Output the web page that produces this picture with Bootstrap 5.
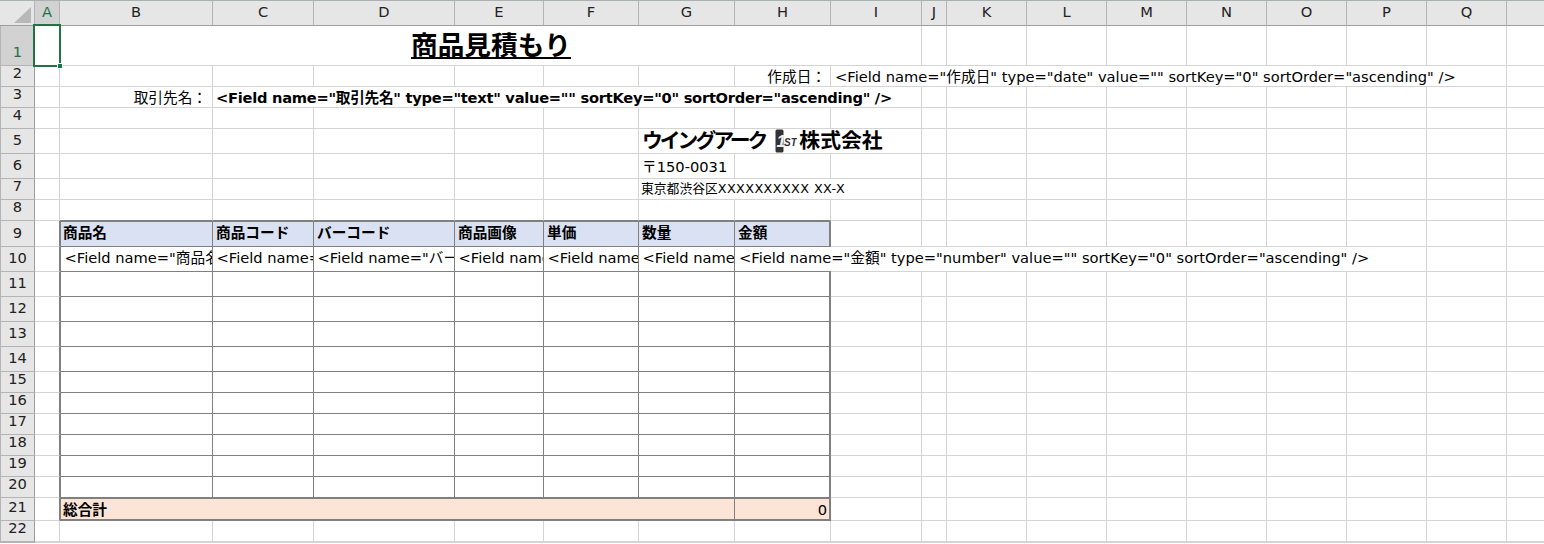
<!DOCTYPE html>
<html lang="ja">
<head>
<meta charset="utf-8">
<title>商品見積もり</title>
<link href="https://cdn.jsdelivr.net/npm/bootstrap@5.3.0/dist/css/bootstrap.min.css" rel="stylesheet">
<style>
html,body{margin:0;height:544px;overflow:hidden;background:#fff}
.sheet{border-collapse:separate;border-spacing:0;table-layout:fixed;width:1544px;font-family:"DejaVu Sans","Noto Sans CJK JP",sans-serif;font-size:14.67px;color:#000;line-height:1}
.sheet td,.sheet th{padding:0 0 1px 4px;border-right:1px solid #d4d4d4;border-bottom:1px solid #d4d4d4;font-weight:400;white-space:nowrap;overflow:hidden;vertical-align:bottom}
.sheet thead th{background:#e6e6e6;border-right:1px solid #b4b4b4;border-bottom:1px solid #9e9e9e;border-top:1px solid #a9b2b0;text-align:center;vertical-align:middle;padding:0 0 2px;color:#222;overflow:visible}
.sheet tbody th{background:#e6e6e6;border-left:1px solid #b4b4b4;border-right:1px solid #9e9e9e;border-bottom:1px solid #b4b4b4;text-align:center;vertical-align:bottom;padding:0 0 5px;color:#222;overflow:visible}
.sheet thead th.cur,.sheet tbody th.cur{background:#d2d2d2;color:#217346}
.sheet thead th:last-child,.sheet td:last-child{border-right:0}
.corner{display:block;margin:4px 0 0 14px}
.w35{width:35px}.w25{width:25px}.w153{width:153px}.w101{width:101px}.w141{width:141px}.w89{width:89px}.w95{width:95px}.w96{width:96px}.w91{width:91px}.w80{width:80px}.w38{width:38px}
.h40 > *{height:40px}.h26 > *{height:26px}.h25 > *{height:25px}.h23 > *{height:23px}.h22 > *{height:22px}.h21 > *{height:21px}
.sheet td.title{font-size:26.67px;font-weight:700;text-decoration:underline;text-align:center;vertical-align:bottom;padding:0 0 5px 1px}
.sheet td.company{font-size:20.8px;font-weight:700;padding:0 0 0 3px;line-height:24px}
.kana{letter-spacing:-3px}
.sheet td.postal{padding:0 0 3px 3px}
.sheet td.addr{font-size:12.8px;padding:0 0 3px 2px}
.addrx{letter-spacing:.4px}
.sheet td.lbl{text-align:right;padding-right:4px}
.sheet td.lblb{padding-right:5px}
.sheet td.bold{font-weight:700;letter-spacing:-.27px;padding-left:3px}
.sheet td.mid{padding:0 0 5px 3.5px}
.sheet td.tb{border-left:1px solid #808080}
.sheet td.ta{border-right:1px solid #808080}
.sheet td.ti{border-right-color:#808080;border-bottom-color:#808080}
.sheet td.tt{border-bottom-color:#808080}
.sheet td.tl{border-right:2px solid #808080;border-bottom-color:#808080}
.sheet td.tu{border-top:1px solid #808080}
.sheet td.td2{border-bottom:2px solid #808080}
.sheet td.spill{border-bottom:0;padding-bottom:6px;background:linear-gradient(#808080,#808080) 0 100%/96px 1px no-repeat,linear-gradient(#d4d4d4,#d4d4d4) 0 100%/100% 1px no-repeat}
.sheet td.hd{background:#d9e1f2;font-weight:700;padding-left:3px;padding-bottom:5px}
.sheet td.hdb{padding-left:2px}
.sheet td.tot{background:#fce4d6;font-weight:700;padding-left:2px;padding-bottom:1px}
.sheet td.amt{background:#fce4d6;text-align:right;padding:0 2px 1px 0}
.sheet td.last,.sheet th.last{border-bottom-width:2px}
.selbox{position:absolute;left:33px;top:24px;width:28px;height:43px;border:2px solid #217346;pointer-events:none}
.selknob{position:absolute;left:57px;top:63px;width:6px;height:6px;background:#217346;border:1px solid #fff}
.logo1{display:inline-block;vertical-align:-1px;margin:-4px 2px -4px 10px}
.sheetwrap{width:1544px;height:544px}
</style>
</head>
<body>
<div class="sheetwrap position-relative overflow-hidden">
<table class="sheet mb-0">
<colgroup><col class="w35"><col class="w25"><col class="w153"><col class="w101"><col class="w141"><col class="w89"><col class="w95"><col class="w96"><col class="w96"><col class="w91"><col class="w25"><col class="w80"><col class="w80"><col class="w80"><col class="w80"><col class="w80"><col class="w80"><col class="w80"><col class="w38"></colgroup>
<thead>
<tr class="h26"><th class="p-0"><svg class="corner" width="17" height="17" viewBox="0 0 17 17"><polygon points="17,0 17,16 0,16" fill="#b8b8b8"/></svg></th><th class="cur">A</th><th>B</th><th>C</th><th>D</th><th>E</th><th>F</th><th>G</th><th>H</th><th>I</th><th>J</th><th>K</th><th>L</th><th>M</th><th>N</th><th>O</th><th>P</th><th>Q</th><th></th></tr>
</thead>
<tbody>
<tr class="h40"><th class="cur">1</th><td></td><td colspan="8" class="title">商品見積もり</td><td></td><td></td><td></td><td></td><td></td><td></td><td></td><td></td><td></td></tr>
<tr class="h21"><th>2</th><td></td><td></td><td></td><td></td><td></td><td></td><td></td><td class="lbl">作成日：</td><td colspan="9">&lt;Field name="作成日" type="date" value="" sortKey="0" sortOrder="ascending" /&gt;</td><td></td></tr>
<tr class="h21"><th>3</th><td></td><td class="lbl lblb">取引先名：</td><td colspan="7" class="bold">&lt;Field name="取引先名" type="text" value="" sortKey="0" sortOrder="ascending" /&gt;</td><td></td><td></td><td></td><td></td><td></td><td></td><td></td><td></td><td></td></tr>
<tr class="h21"><th>4</th><td></td><td></td><td></td><td></td><td></td><td></td><td></td><td></td><td></td><td></td><td></td><td></td><td></td><td></td><td></td><td></td><td></td><td></td></tr>
<tr class="h25"><th>5</th><td></td><td></td><td></td><td></td><td></td><td></td><td colspan="3" class="company"><span class="kana">ウイングアーク</span><svg class="logo1" width="22" height="24" viewBox="0 0 22 24" role="img" aria-label="1ST"><rect x="0.5" y="0.5" width="8" height="23" rx="1.5" fill="#333"/><text x="1.6" y="18" font-family="Liberation Sans, sans-serif" font-size="17" font-weight="700" font-style="italic" fill="#eee">1</text><text x="9" y="17" font-family="Liberation Sans, sans-serif" font-size="10" font-style="italic" fill="#333">ST</text></svg>株式会社</td><td></td><td></td><td></td><td></td><td></td><td></td><td></td><td></td><td></td></tr>
<tr class="h25"><th>6</th><td></td><td></td><td></td><td></td><td></td><td></td><td class="postal">〒150-0031</td><td></td><td></td><td></td><td></td><td></td><td></td><td></td><td></td><td></td><td></td><td></td></tr>
<tr class="h21"><th>7</th><td></td><td></td><td></td><td></td><td></td><td></td><td colspan="3" class="addr">東京都渋谷区<span class="addrx">XXXXXXXXXX XX-X</span></td><td></td><td></td><td></td><td></td><td></td><td></td><td></td><td></td><td></td></tr>
<tr class="h21"><th>8</th><td></td><td class="tt"></td><td class="tt"></td><td class="tt"></td><td class="tt"></td><td class="tt"></td><td class="tt"></td><td class="tt"></td><td></td><td></td><td></td><td></td><td></td><td></td><td></td><td></td><td></td><td></td></tr>
<tr class="h26"><th>9</th><td class="ta"></td><td class="tb tu hd hdb ti">商品名</td><td class="tu hd ti">商品コード</td><td class="tu hd ti">バーコード</td><td class="tu hd ti">商品画像</td><td class="tu hd ti">単価</td><td class="tu hd ti">数量</td><td class="tu hd tl">金額</td><td></td><td></td><td></td><td></td><td></td><td></td><td></td><td></td><td></td><td></td></tr>
<tr class="h25"><th>10</th><td class="ta"></td><td class="tb ti mid">&lt;Field name="商品名" type="text"</td><td class="ti mid">&lt;Field name="商品コード"</td><td class="ti mid">&lt;Field name="バーコード" type</td><td class="ti mid">&lt;Field name="商品</td><td class="ti mid">&lt;Field name="単価"</td><td class="ti mid">&lt;Field name="数量"</td><td colspan="9" class="spill">&lt;Field name="金額" type="number" value="" sortKey="0" sortOrder="ascending" /&gt;</td><td></td><td></td></tr>
<tr class="h25"><th>11</th><td class="ta"></td><td class="tb ti"></td><td class="ti"></td><td class="ti"></td><td class="ti"></td><td class="ti"></td><td class="ti"></td><td class="tl"></td><td></td><td></td><td></td><td></td><td></td><td></td><td></td><td></td><td></td><td></td></tr>
<tr class="h25"><th>12</th><td class="ta"></td><td class="tb ti"></td><td class="ti"></td><td class="ti"></td><td class="ti"></td><td class="ti"></td><td class="ti"></td><td class="tl"></td><td></td><td></td><td></td><td></td><td></td><td></td><td></td><td></td><td></td><td></td></tr>
<tr class="h25"><th>13</th><td class="ta"></td><td class="tb ti"></td><td class="ti"></td><td class="ti"></td><td class="ti"></td><td class="ti"></td><td class="ti"></td><td class="tl"></td><td></td><td></td><td></td><td></td><td></td><td></td><td></td><td></td><td></td><td></td></tr>
<tr class="h25"><th>14</th><td class="ta"></td><td class="tb ti"></td><td class="ti"></td><td class="ti"></td><td class="ti"></td><td class="ti"></td><td class="ti"></td><td class="tl"></td><td></td><td></td><td></td><td></td><td></td><td></td><td></td><td></td><td></td><td></td></tr>
<tr class="h21"><th>15</th><td class="ta"></td><td class="tb ti"></td><td class="ti"></td><td class="ti"></td><td class="ti"></td><td class="ti"></td><td class="ti"></td><td class="tl"></td><td></td><td></td><td></td><td></td><td></td><td></td><td></td><td></td><td></td><td></td></tr>
<tr class="h21"><th>16</th><td class="ta"></td><td class="tb ti"></td><td class="ti"></td><td class="ti"></td><td class="ti"></td><td class="ti"></td><td class="ti"></td><td class="tl"></td><td></td><td></td><td></td><td></td><td></td><td></td><td></td><td></td><td></td><td></td></tr>
<tr class="h21"><th>17</th><td class="ta"></td><td class="tb ti"></td><td class="ti"></td><td class="ti"></td><td class="ti"></td><td class="ti"></td><td class="ti"></td><td class="tl"></td><td></td><td></td><td></td><td></td><td></td><td></td><td></td><td></td><td></td><td></td></tr>
<tr class="h21"><th>18</th><td class="ta"></td><td class="tb ti"></td><td class="ti"></td><td class="ti"></td><td class="ti"></td><td class="ti"></td><td class="ti"></td><td class="tl"></td><td></td><td></td><td></td><td></td><td></td><td></td><td></td><td></td><td></td><td></td></tr>
<tr class="h21"><th>19</th><td class="ta"></td><td class="tb ti"></td><td class="ti"></td><td class="ti"></td><td class="ti"></td><td class="ti"></td><td class="ti"></td><td class="tl"></td><td></td><td></td><td></td><td></td><td></td><td></td><td></td><td></td><td></td><td></td></tr>
<tr class="h21"><th>20</th><td class="ta"></td><td class="tb ti"></td><td class="ti"></td><td class="ti"></td><td class="ti"></td><td class="ti"></td><td class="ti"></td><td class="tl"></td><td></td><td></td><td></td><td></td><td></td><td></td><td></td><td></td><td></td><td></td></tr>
<tr class="h23"><th>21</th><td class="ta"></td><td colspan="6" class="tb tu ti td2 tot">総合計</td><td class="tu tl td2 amt">0</td><td></td><td></td><td></td><td></td><td></td><td></td><td></td><td></td><td></td><td></td></tr>
<tr class="h22"><th class="last">22</th><td class="last"></td><td class="last"></td><td class="last"></td><td class="last"></td><td class="last"></td><td class="last"></td><td class="last"></td><td class="last"></td><td class="last"></td><td class="last"></td><td class="last"></td><td class="last"></td><td class="last"></td><td class="last"></td><td class="last"></td><td class="last"></td><td class="last"></td><td class="last"></td></tr>
</tbody>
</table>
<div class="selbox"></div>
<div class="selknob"></div>
</div>
<script src="https://cdn.jsdelivr.net/npm/bootstrap@5.3.0/dist/js/bootstrap.bundle.min.js"></script>
</body>
</html>
